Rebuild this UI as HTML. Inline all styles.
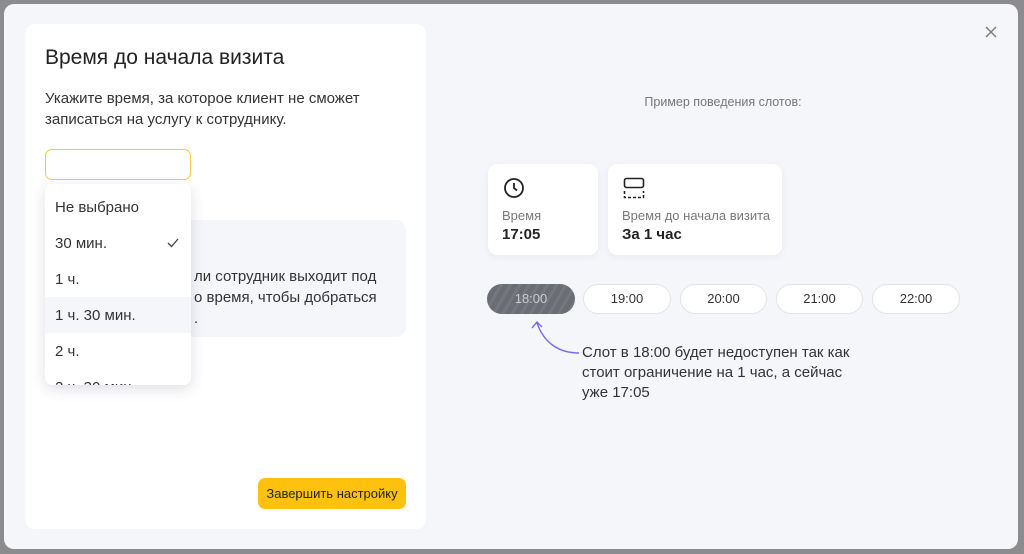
<!DOCTYPE html>
<html><head><meta charset="utf-8"><style>
*{box-sizing:border-box;margin:0;padding:0}
body{width:1024px;height:554px;background:#8c8c8e;font-family:"Liberation Sans",sans-serif;position:relative;overflow:hidden;color:#222}
.modal{position:absolute;left:4px;top:4px;width:1014px;height:545px;background:#f5f6fa;border-radius:10px}
.abs{position:absolute}
.panel{left:21px;top:20px;width:401px;height:505px;background:#fff;border-radius:10px}
h1{font-size:21px;font-weight:normal;color:#222;left:41px;top:42px;white-space:nowrap}
.desc{left:41px;top:84px;font-size:15px;line-height:21px;color:#333;white-space:nowrap}
.input{left:41px;top:145px;width:146px;height:31px;border:1.5px solid #f7c948;border-radius:7px;background:#fff}
.info{left:181px;top:216px;width:221px;height:117px;background:#f5f6fa;border-radius:10px;font-size:15px;line-height:21px;color:#333;overflow:hidden}
.dd{left:41px;top:180px;width:146px;height:201px;background:#fff;border-radius:7px;box-shadow:0 4px 14px rgba(40,40,80,.15);overflow:hidden}
.it{height:36px;line-height:38px;padding-left:10px;font-size:15px;color:#333;position:relative}
.btn{left:254px;top:474px;width:148px;height:31px;background:#fdc10e;border-radius:7px;font-size:13px;color:#222;text-align:center;line-height:31px}
.card{background:#fff;border-radius:9px;box-shadow:0 2px 8px rgba(40,40,80,.06)}
.lbl{font-size:13px;color:#777}
.val{font-size:15px;font-weight:bold;color:#222}
.slot{top:280px;height:30px;border-radius:15px;background:#fff;border:1px solid #e3e4ea;font-size:13px;text-align:center;line-height:28px;color:#333}
</style></head><body>
<div class="modal">
<div class="abs panel"></div>
<h1 class="abs">Время до начала визита</h1>
<div class="abs desc">Укажите время, за которое клиент не сможет<br>записаться на услугу к сотруднику.</div>
<div class="abs input"></div>
<div class="abs info"><div style="position:absolute;left:9px;top:46px;white-space:nowrap">ли сотрудник выходит под<br>о время, чтобы добраться<br>.</div></div>
<div class="abs dd">
<div class="it" style="margin-top:5px">Не выбрано</div>
<div class="it">30 мин.<svg style="position:absolute;right:12px;top:13px" width="12" height="10" viewBox="0 0 12 10"><path d="M1 5l3.5 3.5L11 1" fill="none" stroke="#444" stroke-width="1.3"/></svg></div>
<div class="it">1 ч.</div>
<div class="it" style="background:#f5f6fa">1 ч. 30 мин.</div>
<div class="it">2 ч.</div>
<div class="it">2 ч. 30 мин.</div>
</div>
<div class="abs btn">Завершить настройку</div>
<svg class="abs" style="left:981px;top:22px" width="12" height="12" viewBox="0 0 12 12"><path d="M1 1l10 10M11 1L1 11" stroke="#777" stroke-width="1.3"/></svg>
<div class="abs" style="left:0;top:91px;text-align:center;font-size:12.5px;color:#777;width:1438px">Пример поведения слотов:</div>
<div class="abs card" style="left:484px;top:160px;width:110px;height:91px">
<svg class="abs" style="left:15px;top:13px" width="22" height="22" viewBox="0 0 22 22"><circle cx="11" cy="11" r="9" fill="none" stroke="#222" stroke-width="1.8"/><path d="M11 6v5l3 2.5" fill="none" stroke="#222" stroke-width="1.8"/></svg>
<div class="abs lbl" style="left:14px;top:44px">Время</div>
<div class="abs val" style="left:14px;top:62px">17:05</div></div>
<div class="abs card" style="left:604px;top:160px;width:174px;height:91px">
<svg class="abs" style="left:15px;top:13px" width="22" height="24" viewBox="0 0 22 24"><rect x="1.5" y="1.5" width="19" height="9" rx="2" fill="none" stroke="#222" stroke-width="1.6"/><path d="M1.5 14v6.5h19V14" fill="none" stroke="#222" stroke-width="1.6" stroke-dasharray="3 2"/></svg>
<div class="abs lbl" style="left:14px;top:44px;white-space:nowrap">Время до начала визита</div>
<div class="abs val" style="left:14px;top:62px">За 1 час</div></div>
<div class="abs slot" style="left:483px;width:88px;background:repeating-linear-gradient(-60deg,#6b6d75 0 5px,#757780 5px 8px);border:none;color:#ccc;line-height:30px">18:00</div>
<div class="abs slot" style="left:579px;width:88px">19:00</div>
<div class="abs slot" style="left:676px;width:87px">20:00</div>
<div class="abs slot" style="left:772px;width:87px">21:00</div>
<div class="abs slot" style="left:868px;width:88px">22:00</div>
<svg class="abs" style="left:520px;top:314px" width="60" height="40" viewBox="0 0 60 40"><path d="M55 35C35 35 20 25 13 5M8 10l5-6 5 5" fill="none" stroke="#7b68ee" stroke-width="1.4"/></svg>
<div class="abs" style="left:578px;top:339px;font-size:15px;line-height:20px;color:#333;white-space:nowrap">Слот в 18:00 будет недоступен так как<br>стоит ограничение на 1 час, а сейчас<br>уже 17:05</div>
</div>
</body></html>
